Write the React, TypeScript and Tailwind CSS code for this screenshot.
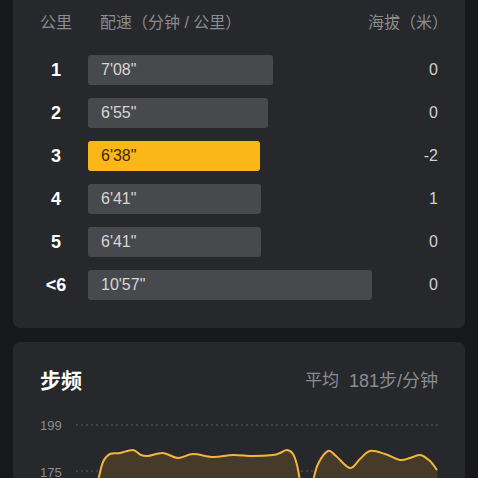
const font = "font-['Liberation_Sans','Noto_Sans_CJK_SC',sans-serif]";

const splits = [
  { km: '1', pace: `7'08"`, bar: 'w-[185px]', alt: '0', hot: false },
  { km: '2', pace: `6'55"`, bar: 'w-[180px]', alt: '0', hot: false },
  { km: '3', pace: `6'38"`, bar: 'w-[172px]', alt: '-2', hot: true },
  { km: '4', pace: `6'41"`, bar: 'w-[173px]', alt: '1', hot: false },
  { km: '5', pace: `6'41"`, bar: 'w-[173px]', alt: '0', hot: false },
  { km: '<6', pace: `10'57"`, bar: 'w-[284px]', alt: '0', hot: false },
];

// cadence curve, page coords -> shifted into svg space (x-76, y-410)
const seg1: [number, number][] = [
  [98, 482], [103, 463], [110, 455], [120, 454], [133, 451], [141, 456], [148, 457],
  [163, 454], [178, 459], [193, 455], [213, 458], [233, 456], [253, 457], [273, 456],
  [280, 454], [287, 451], [293, 455], [297, 466], [300, 482],
];
const seg2: [number, number][] = [
  [313, 482], [318, 465], [328, 452], [336, 457], [350, 469], [360, 460], [370, 452],
  [385, 455], [400, 461], [410, 459], [420, 456], [430, 462], [437, 471],
];

function smooth(pts: [number, number][]) {
  const p = pts.map(([x, y]) => [x - 76, y - 410]);
  let d = `M${p[0][0]},${p[0][1]}`;
  for (let i = 0; i < p.length - 1; i++) {
    const p0 = p[i - 1] || p[i];
    const p1 = p[i];
    const p2 = p[i + 1];
    const p3 = p[i + 2] || p2;
    const c1x = p1[0] + (p2[0] - p0[0]) / 6;
    const c1y = p1[1] + (p2[1] - p0[1]) / 6;
    const c2x = p2[0] - (p3[0] - p1[0]) / 6;
    const c2y = p2[1] - (p3[1] - p1[1]) / 6;
    d += ` C${c1x},${c1y} ${c2x},${c2y} ${p2[0]},${p2[1]}`;
  }
  return d;
}

function area(pts: [number, number][]) {
  const last = pts[pts.length - 1];
  const first = pts[0];
  return `${smooth(pts)} L${last[0] - 76},80 L${first[0] - 76},80 Z`;
}

export default function App() {
  return (
    <div className={`w-[478px] h-[478px] overflow-hidden bg-[#17181b] px-[13px] flex flex-col gap-[14px] ${font}`}>
      {/* 分段配速 */}
      <section className="shrink-0 rounded-b-[7px] bg-[#26282c] px-[27px] pt-[12px] pb-[28px]">
        <div className="flex items-center h-[22px] text-[16px] text-[#8b8c90]">
          <span className="w-[33px]">公里</span>
          <span className="ml-[27px] flex-1">配速（分钟 / 公里）</span>
          <span className="-mr-[10px]">海拔（米）</span>
        </div>
        <div className="mt-[21px] flex flex-col gap-[13px]">
          {splits.map((s) => (
            <div key={s.km} className="flex items-center h-[30px]">
              <span className="w-[32px] text-center text-[18px] font-bold text-white">{s.km}</span>
              <div className="ml-[16px] flex-1">
                <div
                  className={`${s.bar} h-[30px] rounded-[3px] flex items-center pl-[13px] text-[16px] ${
                    s.hot ? 'bg-[#fbb617] text-[#3a2a06]' : 'bg-[#48494d] text-[#d6d6d6]'
                  }`}
                >
                  {s.pace}
                </div>
              </div>
              <span className="text-[16px] text-[#d0d0d0]">{s.alt}</span>
            </div>
          ))}
        </div>
      </section>

      {/* 步频 */}
      <section className="flex-1 rounded-t-[7px] bg-[#26282c] px-[27px] pt-[27px]">
        <div className="flex items-center justify-between h-[24px]">
          <h2 className="text-[21px] font-bold text-white">步频</h2>
          <div className="text-[17px] text-[#8b8c90] flex items-center gap-[10px]">
            <span>平均</span>
            <span className="text-[18px]">181步/分钟</span>
          </div>
        </div>
        <div className="mt-[16px] flex">
          <div className="w-[36px] relative h-[80px] text-[13px] text-[#8b8c90]">
            <span className="absolute left-0 top-[7px]">199</span>
            <span className="absolute left-0 top-[54px]">175</span>
          </div>
          <svg width="362" height="80" viewBox="0 0 362 80" className="block">
            <line x1="0" y1="16" x2="362" y2="16" stroke="#5a5c60" strokeWidth="1" strokeDasharray="2 3" />
            <line x1="0" y1="62" x2="362" y2="62" stroke="#5a5c60" strokeWidth="1" strokeDasharray="2 3" />
            <path d={area(seg1)} fill="#463b29" />
            <path d={area(seg2)} fill="#463b29" />
            <path d={smooth(seg1)} fill="none" stroke="#f4b53c" strokeWidth="2" strokeLinejoin="round" />
            <path d={smooth(seg2)} fill="none" stroke="#f4b53c" strokeWidth="2" strokeLinejoin="round" />
          </svg>
        </div>
      </section>
    </div>
  );
}
